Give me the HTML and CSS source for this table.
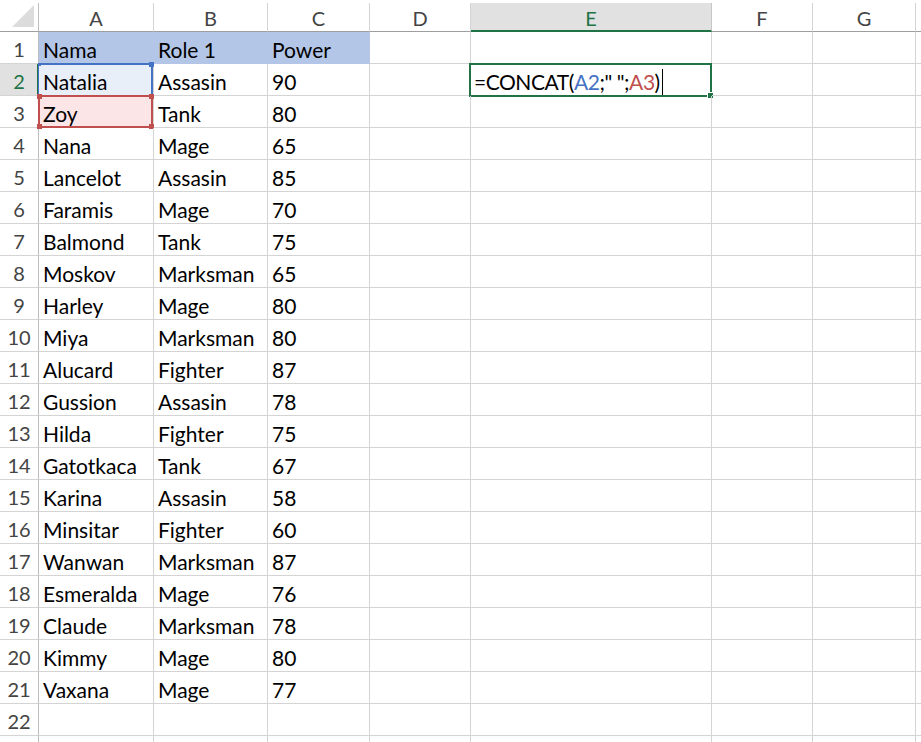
FILE: index.html
```html
<!DOCTYPE html>
<html>
<head>
<meta charset="utf-8">
<link rel="stylesheet" href="styles.css">
</head>
<body>
<div class="sheet">
  <div class="corner"><svg class="tri" width="24" height="24" viewBox="0 0 24 24"><polygon points="1,22 23,22 23,0" fill="#dcdcdc"/></svg></div>
  <div class="ch">A</div><div class="ch">B</div><div class="ch">C</div><div class="ch">D</div><div class="ch ch-sel">E</div><div class="ch">F</div><div class="ch">G</div><div class="ch"></div>

  <div class="rh">1</div><div class="c hdr">Nama</div><div class="c hdr">Role 1</div><div class="c hdr">Power</div><div class="c"></div><div class="c"></div><div class="c"></div><div class="c"></div><div class="c"></div>

  <div class="rh rh-sel">2</div><div class="c ref-blue">Natalia<span class="box box-blue"><i class="sq tl"></i><i class="sq tr"></i></span></div><div class="c">Assasin</div><div class="c">90</div><div class="c"></div><div class="c active"><span class="f">=CONCAT(<span class="rb">A2</span>;" ";<span class="rr">A3</span>)</span><span class="caret"></span><span class="abox"><i class="handle"></i></span></div><div class="c"></div><div class="c"></div><div class="c"></div>

  <div class="rh">3</div><div class="c ref-red">Zoy<span class="box box-red"><i class="sq tl"></i><i class="sq tr"></i><i class="sq bl"></i><i class="sq br"></i></span></div><div class="c">Tank</div><div class="c">80</div><div class="c"></div><div class="c"></div><div class="c"></div><div class="c"></div><div class="c"></div>

  <div class="rh">4</div><div class="c">Nana</div><div class="c">Mage</div><div class="c">65</div><div class="c"></div><div class="c"></div><div class="c"></div><div class="c"></div><div class="c"></div>
  <div class="rh">5</div><div class="c">Lancelot</div><div class="c">Assasin</div><div class="c">85</div><div class="c"></div><div class="c"></div><div class="c"></div><div class="c"></div><div class="c"></div>
  <div class="rh">6</div><div class="c">Faramis</div><div class="c">Mage</div><div class="c">70</div><div class="c"></div><div class="c"></div><div class="c"></div><div class="c"></div><div class="c"></div>
  <div class="rh">7</div><div class="c">Balmond</div><div class="c">Tank</div><div class="c">75</div><div class="c"></div><div class="c"></div><div class="c"></div><div class="c"></div><div class="c"></div>
  <div class="rh">8</div><div class="c">Moskov</div><div class="c">Marksman</div><div class="c">65</div><div class="c"></div><div class="c"></div><div class="c"></div><div class="c"></div><div class="c"></div>
  <div class="rh">9</div><div class="c">Harley</div><div class="c">Mage</div><div class="c">80</div><div class="c"></div><div class="c"></div><div class="c"></div><div class="c"></div><div class="c"></div>
  <div class="rh">10</div><div class="c">Miya</div><div class="c">Marksman</div><div class="c">80</div><div class="c"></div><div class="c"></div><div class="c"></div><div class="c"></div><div class="c"></div>
  <div class="rh">11</div><div class="c">Alucard</div><div class="c">Fighter</div><div class="c">87</div><div class="c"></div><div class="c"></div><div class="c"></div><div class="c"></div><div class="c"></div>
  <div class="rh">12</div><div class="c">Gussion</div><div class="c">Assasin</div><div class="c">78</div><div class="c"></div><div class="c"></div><div class="c"></div><div class="c"></div><div class="c"></div>
  <div class="rh">13</div><div class="c">Hilda</div><div class="c">Fighter</div><div class="c">75</div><div class="c"></div><div class="c"></div><div class="c"></div><div class="c"></div><div class="c"></div>
  <div class="rh">14</div><div class="c">Gatotkaca</div><div class="c">Tank</div><div class="c">67</div><div class="c"></div><div class="c"></div><div class="c"></div><div class="c"></div><div class="c"></div>
  <div class="rh">15</div><div class="c">Karina</div><div class="c">Assasin</div><div class="c">58</div><div class="c"></div><div class="c"></div><div class="c"></div><div class="c"></div><div class="c"></div>
  <div class="rh">16</div><div class="c">Minsitar</div><div class="c">Fighter</div><div class="c">60</div><div class="c"></div><div class="c"></div><div class="c"></div><div class="c"></div><div class="c"></div>
  <div class="rh">17</div><div class="c">Wanwan</div><div class="c">Marksman</div><div class="c">87</div><div class="c"></div><div class="c"></div><div class="c"></div><div class="c"></div><div class="c"></div>
  <div class="rh">18</div><div class="c">Esmeralda</div><div class="c">Mage</div><div class="c">76</div><div class="c"></div><div class="c"></div><div class="c"></div><div class="c"></div><div class="c"></div>
  <div class="rh">19</div><div class="c">Claude</div><div class="c">Marksman</div><div class="c">78</div><div class="c"></div><div class="c"></div><div class="c"></div><div class="c"></div><div class="c"></div>
  <div class="rh">20</div><div class="c">Kimmy</div><div class="c">Mage</div><div class="c">80</div><div class="c"></div><div class="c"></div><div class="c"></div><div class="c"></div><div class="c"></div>
  <div class="rh">21</div><div class="c">Vaxana</div><div class="c">Mage</div><div class="c">77</div><div class="c"></div><div class="c"></div><div class="c"></div><div class="c"></div><div class="c"></div>
  <div class="rh">22</div><div class="c"></div><div class="c"></div><div class="c"></div><div class="c"></div><div class="c"></div><div class="c"></div><div class="c"></div><div class="c"></div>
  <div class="rh"></div><div class="c"></div><div class="c"></div><div class="c"></div><div class="c"></div><div class="c"></div><div class="c"></div><div class="c"></div><div class="c"></div>
</div>
</body>
</html>
```
FILE: styles.css
```css
html, body {
  margin: 0;
  padding: 0;
  background: #fff;
  overflow: hidden;
}
body {
  width: 921px;
  height: 742px;
}
.sheet {
  display: grid;
  grid-template-columns: 39px 115px 114px 102px 101px 241px 101px 103px 40px;
  grid-template-rows: 29px repeat(23, 32px);
  padding-top: 3px;
  font-family: Lato, "Noto Sans", sans-serif;
  font-size: 21px;
  color: #000;
}
.corner {
  border-right: 1px solid #bdbdbd;
  border-bottom: 1px solid #9e9e9e;
  position: relative;
}
.tri {
  position: absolute;
  right: 3px;
  bottom: 2px;
}
.ch {
  box-sizing: border-box;
  border-right: 1px solid #d4d4d4;
  border-bottom: 1px solid #9e9e9e;
  text-align: center;
  color: #444;
  font-size: 20px;
  padding-top: 3px;
  line-height: 25px;
}
.ch-sel {
  background: #e1e1e1;
  color: #217346;
  border-bottom: 2px solid #217346;
  border-right-color: #c6c6c6;
  line-height: 24px;
}
.rh {
  box-sizing: border-box;
  border-right: 1px solid #bdbdbd;
  border-bottom: 1px solid #d4d4d4;
  text-align: center;
  color: #444;
  font-size: 20px;
  line-height: 27px;
  padding-top: 4px;
}
.rh-sel {
  background: #e1e1e1;
  color: #217346;
  border-right: 2px solid #217346;
  padding-left: 1px;
}
.c {
  box-sizing: border-box;
  border-right: 1px solid #d4d4d4;
  border-bottom: 1px solid #d4d4d4;
  padding: 4px 0 0 4px;
  line-height: 27px;
  white-space: nowrap;
  position: relative;
}
.hdr {
  background: #b4c6e7;
  border-right-color: #b4c6e7;
  border-bottom-color: #b4c6e7;
}
.ref-blue {
  background: #e9eff8;
}
.ref-red {
  background: #fbe5e6;
}
.box {
  position: absolute;
  top: -1px;
  left: -1px;
  right: 0;
  bottom: -1px;
  border: 2px solid;
  pointer-events: none;
}
.box-blue {
  border-color: #4472c4;
  border-width: 2px 2px 0 1px;
  bottom: 0;
}
.box-red {
  border-color: #c0504d;
}
.box-blue .sq { background: #4472c4; }
.box-red .sq { background: #c0504d; }
.sq {
  position: absolute;
  width: 5px;
  height: 5px;
}
.sq.tl { top: -3px; left: -3px; }
.sq.tr { top: -3px; right: -3px; }
.sq.bl { bottom: -3px; left: -3px; }
.sq.br { bottom: -3px; right: -3px; }
.box-blue .sq.tl { width: 3px; height: 3px; top: -2px; left: -1px; }
.active {
  padding-left: 3px;
}
.f {
  color: #000;
  letter-spacing: -0.45px;
}
.rb { color: #4472c4; }
.rr { color: #c0504d; }
.caret {
  display: inline-block;
  width: 1px;
  height: 27px;
  background: #000;
  vertical-align: -6px;
  margin-left: 2px;
}
.abox {
  position: absolute;
  top: -1px;
  left: -2px;
  right: -1px;
  bottom: -2px;
  border: 2px solid #217346;
}
.handle {
  position: absolute;
  right: -4px;
  bottom: -4px;
  width: 5px;
  height: 5px;
  background: #217346;
  border: 1px solid #fff;
}
```
